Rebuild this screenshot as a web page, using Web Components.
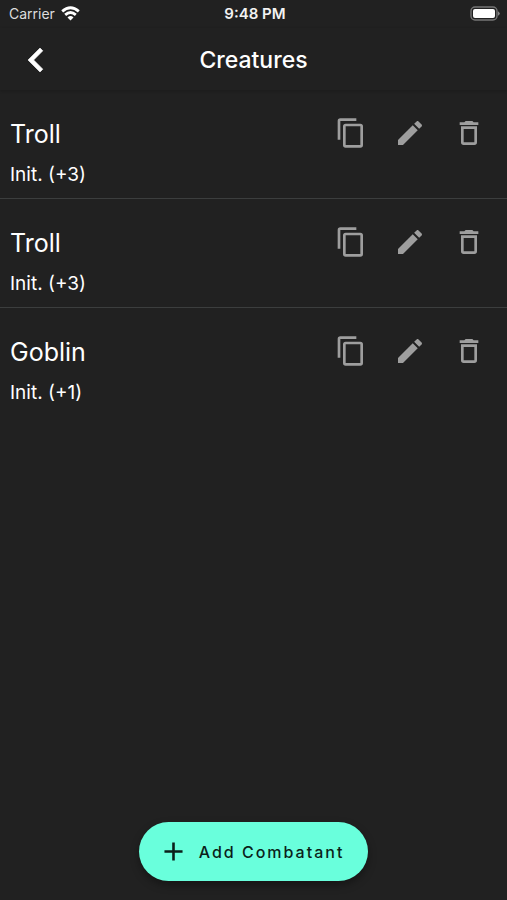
<!DOCTYPE html>
<html lang="en">
<head>
<meta charset="utf-8">
<meta name="viewport" content="width=device-width, initial-scale=1">
<title>Creatures</title>
<style>
  html, body { margin: 0; background: #212121; }
  body { font-family: Inter, "Liberation Sans", sans-serif; color: #fff; }
</style>
</head>
<body>
<creatures-screen></creatures-screen>
<script>
const ICONS = {
  copy: 'M19,21H8V7H19M19,5H8A2,2 0 0,0 6,7V21A2,2 0 0,0 8,23H19A2,2 0 0,0 21,21V7A2,2 0 0,0 19,5M16,1H4A2,2 0 0,0 2,3V17H4V3H16V1Z',
  edit: 'M20.71,7.04C21.1,6.65 21.1,6 20.71,5.63L18.37,3.29C18,2.9 17.35,2.9 16.96,3.29L15.12,5.12L18.87,8.87M3,17.25V21H6.75L17.81,9.93L14.06,6.18L3,17.25Z',
  trash: 'M6,19A2,2 0 0,0 8,21H16A2,2 0 0,0 18,19V7H6V19M8,9H16V19H8V9M15.5,4L14.5,3H9.5L8.5,4H5V6H19V4H15.5Z',
  back: 'M15.41,16.58L10.83,12L15.41,7.41L14,6L8,12L14,18L15.41,16.58Z',
  plus: 'M19,13H13V19H11V13H5V11H11V5H13V11H19V13Z'
};

class AppIcon extends HTMLElement {
  connectedCallback() {
    if (this.shadowRoot) return;
    this.attachShadow({ mode: 'open' }).innerHTML = `
      <style>
        :host { display: block; width: 32px; height: 32px; }
        svg { display: block; width: 100%; height: 100%; fill: currentColor; }
      </style>
      <svg viewBox="0 0 24 24" aria-hidden="true"><path d="${ICONS[this.getAttribute('name')]}"/></svg>`;
  }
}
customElements.define('app-icon', AppIcon);

class StatusBar extends HTMLElement {
  connectedCallback() {
    if (this.shadowRoot) return;
    this.attachShadow({ mode: 'open' }).innerHTML = `
      <style>
        :host { display: grid; grid-template-columns: 1fr auto 1fr; align-items: center;
                height: 28px; padding: 0 6px 0 9px; font-size: 15px; line-height: 20px; }
        .carrier { display: flex; align-items: center; gap: 6px; color: #ddd; font-size: 14px; }
        .time { font-weight: 600; color: #f2f2f2; }
        svg { display: block; }
        .carrier svg { margin-bottom: 2px; }
        .battery { justify-self: end; margin-bottom: 2px; }
      </style>
      <div class="carrier"><span>Carrier</span>
        <svg width="19" height="15" viewBox="0 0 19 15" aria-hidden="true">
          <g fill="none" stroke="#fff" stroke-width="2.8">
            <path d="M1.2 5.4Q9.5 -1.8 17.8 5.4"/>
            <path d="M4.2 8.9Q9.5 4.1 14.8 8.9"/>
          </g>
          <path fill="#fff" d="M6.5 11.4Q9.5 8.8 12.5 11.4L9.5 14.5Z"/>
        </svg>
      </div>
      <span class="time">9:48 PM</span>
      <svg class="battery" width="31" height="15" viewBox="0 0 31 15" aria-hidden="true">
        <rect x="1" y="1" width="26" height="13" rx="4" fill="none" stroke="#757575" stroke-width="1.4"/>
        <rect x="3" y="3" width="22" height="9" rx="2" fill="#fff"/>
        <path d="M28 5.2Q31.5 7.5 28 9.8Z" fill="#858585"/>
      </svg>`;
  }
}
customElements.define('status-bar', StatusBar);

class NavHeader extends HTMLElement {
  connectedCallback() {
    if (this.shadowRoot) return;
    this.attachShadow({ mode: 'open' }).innerHTML = `
      <style>
        :host { display: grid; grid-template-columns: 48px 1fr 48px; align-items: center;
                height: 62px; padding: 2px 12px 0; box-sizing: border-box;
                box-shadow: 0 1px 3px rgba(0,0,0,.2); }
        button { padding: 0; border: 0; background: none; color: #fff; cursor: pointer; }
        app-icon { width: 48px; height: 48px; stroke: currentColor; stroke-width: .3; }
        h1 { margin: 0; font-size: 23px; line-height: 32px; font-weight: 500; text-align: center; }
      </style>
      <button type="button" aria-label="Back"><app-icon name="back"></app-icon></button>
      <h1><slot></slot></h1>`;
  }
}
customElements.define('nav-header', NavHeader);

class CreatureRow extends HTMLElement {
  connectedCallback() {
    if (this.shadowRoot) return;
    this.attachShadow({ mode: 'open' }).innerHTML = `
      <style>
        :host { display: flex; align-items: flex-start; justify-content: space-between;
                padding: 27px 9px 10px 10px; border-bottom: 1px solid #3c3e3e; }
        :host(:last-of-type) { border-bottom: 0; }
        h2 { margin: 0 0 10px; font-size: 25px; line-height: 34px; font-weight: 400; }
        p { margin: 0; font-size: 19px; line-height: 27px; }
        .actions { display: flex; }
        button { display: flex; justify-content: center; width: 59px; padding: 0; border: 0;
                 background: none; color: #9e9e9e; cursor: pointer; }
      </style>
      <div><h2><slot></slot></h2><p><slot name="init"></slot></p></div>
      <div class="actions">
        <button type="button" aria-label="Duplicate"><app-icon name="copy"></app-icon></button>
        <button type="button" aria-label="Edit"><app-icon name="edit"></app-icon></button>
        <button type="button" aria-label="Delete"><app-icon name="trash"></app-icon></button>
      </div>`;
  }
}
customElements.define('creature-row', CreatureRow);

class AddButton extends HTMLElement {
  connectedCallback() {
    if (this.shadowRoot) return;
    this.attachShadow({ mode: 'open' }).innerHTML = `
      <style>
        :host { display: block; }
        button { display: flex; align-items: center; gap: 10px; height: 59px; padding: 0 24px 0 19px;
                 border: 0; border-radius: 30px; background: #69ffdc; color: #0b1f1a;
                 font: 500 16px/24px Inter, "Liberation Sans", sans-serif; letter-spacing: 2px;
                 box-shadow: 0 4px 8px rgba(0,0,0,.35); cursor: pointer; }
        app-icon { width: 31px; height: 31px; }
      </style>
      <button type="button"><app-icon name="plus"></app-icon><span><slot></slot></span></button>`;
  }
}
customElements.define('add-button', AddButton);

class CreaturesScreen extends HTMLElement {
  connectedCallback() {
    if (this.shadowRoot) return;
    this.attachShadow({ mode: 'open' }).innerHTML = `
      <style>
        :host { display: flex; flex-direction: column; min-height: 100vh; background: #212121; }
        main { flex: 1; }
        footer { display: flex; justify-content: center; padding: 19px; }
      </style>
      <status-bar></status-bar>
      <nav-header>Creatures</nav-header>
      <main>
        <creature-row>Troll<span slot="init">Init. (+3)</span></creature-row>
        <creature-row>Troll<span slot="init">Init. (+3)</span></creature-row>
        <creature-row>Goblin<span slot="init">Init. (+1)</span></creature-row>
      </main>
      <footer><add-button>Add Combatant</add-button></footer>`;
  }
}
customElements.define('creatures-screen', CreaturesScreen);
</script>
</body>
</html>
